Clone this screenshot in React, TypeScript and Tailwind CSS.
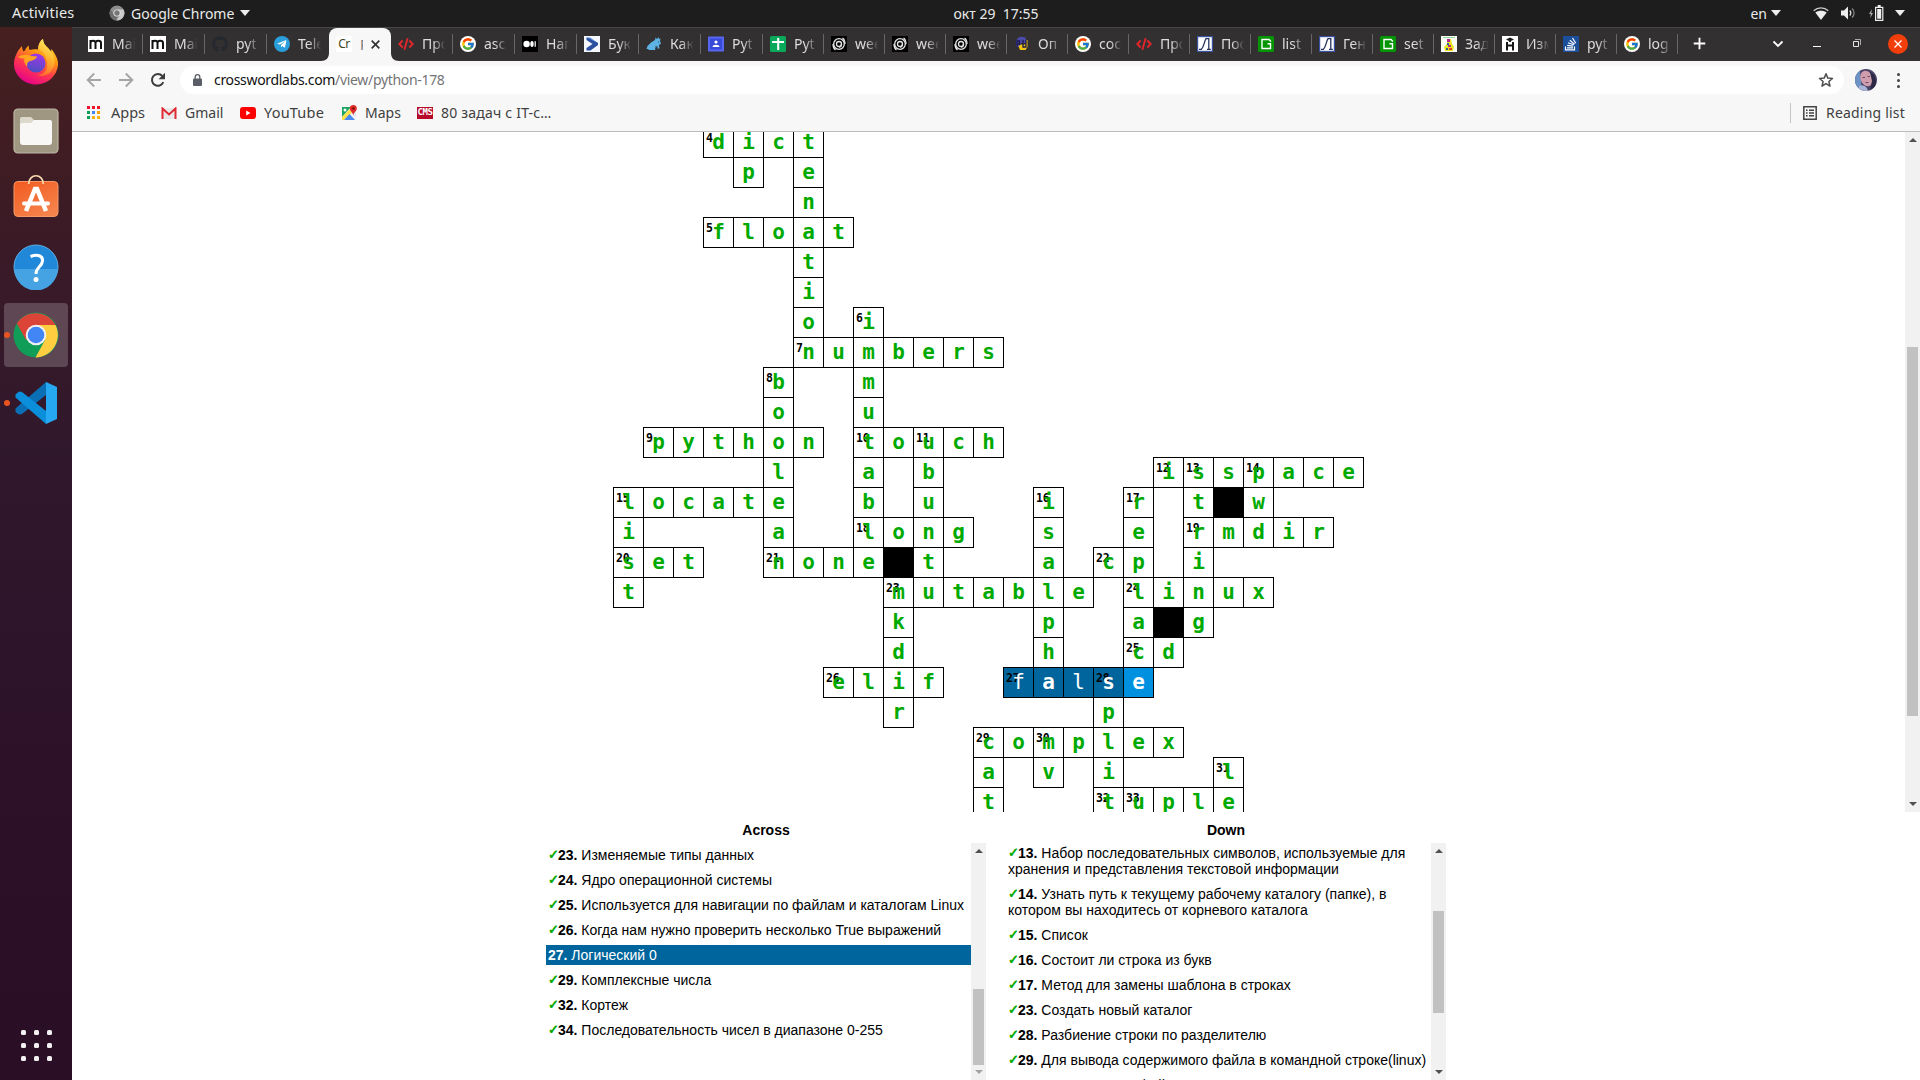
import React from "react";
import { FaGithub, FaTelegramPlane } from "react-icons/fa";
import { FcGoogle } from "react-icons/fc";

const ROWS = 23;
const COLS = 25;

type Word = [row: number, col: number, dir: "a" | "d", text: string, num?: number];

const WORDS: Word[] = [
  [0, 3, "a", "dict", 4],
  [0, 4, "d", "ip"],
  [0, 6, "d", "tenation"],
  [3, 3, "a", "float", 5],
  [6, 8, "d", "immutable", 6],
  [7, 6, "a", "numbers", 7],
  [8, 5, "d", "boolean", 8],
  [10, 1, "a", "python", 9],
  [10, 8, "a", "touch", 10],
  [10, 10, "d", "ubuntu", 11],
  [11, 18, "a", "isspace", 12],
  [11, 19, "d", "string", 13],
  [11, 21, "d", "pwd", 14],
  [12, 0, "a", "locate", 15],
  [12, 0, "d", "list", 15],
  [12, 14, "d", "isalpha", 16],
  [12, 17, "d", "replace", 17],
  [13, 8, "a", "long", 18],
  [13, 19, "a", "rmdir", 19],
  [14, 0, "a", "set", 20],
  [14, 5, "a", "none", 21],
  [14, 16, "a", "cp", 22],
  [15, 9, "a", "mutable", 23],
  [15, 9, "d", "mkdir", 23],
  [15, 17, "a", "linux", 24],
  [17, 17, "a", "cd", 25],
  [18, 7, "a", "elif", 26],
  [18, 13, "a", "false", 27],
  [18, 16, "d", "split", 28],
  [20, 12, "a", "complex", 29],
  [20, 12, "d", "cat", 29],
  [20, 14, "d", "mv", 30],
  [21, 20, "d", "le", 31],
  [22, 16, "a", "tuple", 32],
  [22, 17, "a", "u", 33],
];

const BLACK = new Set(["12-20", "14-9", "16-18"]);

const letters: Record<string, string> = {};
const numbers: Record<string, number> = {};
WORDS.forEach(([r, c, dir, text, num]) => {
  text.split("").forEach((ch, i) => {
    letters[dir === "a" ? `${r}-${c + i}` : `${r + i}-${c}`] = ch;
  });
  if (num) numbers[`${r}-${c}`] = num;
});

function Cell({ id }: { id: string }) {
  if (BLACK.has(id)) return <div className="size-[31px] bg-black" />;
  const ch = letters[id];
  if (!ch) return <div />;
  const [r, c] = id.split("-").map(Number);
  const selected = r === 18 && c >= 13 && c <= 17;
  const fill = selected ? (c === 17 ? "bg-[#0090e0] text-white" : "bg-[#00659c] text-white") : "bg-white text-[#00aa00]";
  const weight = selected && (c === 13 || c === 15) ? "font-normal" : "font-bold";
  return (
    <div className={`relative size-[31px] border border-black text-center ${fill}`}>
      {numbers[id] && (
        <span className="absolute left-[2px] top-[3px] text-[11.5px] leading-[14px] tracking-[-0.2px] font-bold text-black">{numbers[id]}</span>
      )}
      <span className={`relative block text-[21px] leading-[28px] ${weight}`}>{ch}</span>
    </div>
  );
}

function Crossword() {
  const cells: React.ReactNode[] = [];
  for (let r = 0; r < ROWS; r++) for (let c = 0; c < COLS; c++) cells.push(<Cell key={`${r}-${c}`} id={`${r}-${c}`} />);
  return (
    <div className="-mt-[5px] ml-[541px] grid auto-rows-[30px] grid-cols-[repeat(25,30px)] [font-family:'DejaVu_Sans_Mono',monospace]">
      {cells}
    </div>
  );
}

/* ---------- tab icons ---------- */

const G = () => (
  <span className="flex size-4 items-center justify-center rounded-full bg-white"><FcGoogle size={14} /></span>
);
const M = () => (
  <svg viewBox="0 0 16 16" className="size-4"><path fill="#fff" d="M0 0h16v16H0z" /><path fill="none" stroke="#111" strokeWidth="2" d="M2.500 13V4M2.500 7c0-3 5-3 5 0v6M7.500 7c0-3 5.500-3 5.500 0v6" /></svg>
);
const Code = () => (
  <svg viewBox="0 0 16 16" className="size-4"><path fill="none" stroke="#e3262c" strokeWidth="1.900" d="M4.700 4.500 1.300 8l3.400 3.500M11.300 4.500 14.700 8l-3.400 3.500M9.600 2.200 6.400 13.800" /></svg>
);
const Medium = () => (
  <svg viewBox="0 0 16 16" className="size-4"><rect width="16" height="16" fill="#000" /><circle cx="4.600" cy="8" r="3.200" fill="#fff" /><ellipse cx="10" cy="8" rx="1.700" ry="3" fill="#fff" /><rect x="12.600" y="5.200" width="1.200" height="5.600" fill="#fff" /></svg>
);
const Buk = () => (
  <svg viewBox="0 0 16 16" className="size-4"><rect width="16" height="16" fill="#f4f7fd" /><path fill="#4e84d6" d="M2.500 1.500H6L14 7v1.500L11 8z" /><path fill="#2c4f9e" d="M14 7v2L6.500 14.500h-4V12L8.500 8l-6-4V1.500z" /></svg>
);
const Rat = () => (
  <svg viewBox="0 0 16 16" className="size-4"><path fill="#5db4e4" d="M9 4l.5-2.500L11 3l1.500-2 .5 2 1.500-.5L14 5l1 2.500-2 1.500.5 3.500h-2L11 10l-2 2.500.5 1.500H2l1-1H.5l1-3L5 6.500z" /><path stroke="#2f4d60" strokeWidth="1" d="M9 11h3M12 6h1" /></svg>
);
const Classroom = () => (
  <svg viewBox="0 0 16 16" className="size-4"><rect width="16" height="15" y=".5" rx="1" fill="#5767f2" /><rect x="2" y="2.500" width="12" height="11" fill="#3949d8" /><circle cx="8" cy="6" r="1.600" fill="#fff" /><path fill="#fff" d="M4.500 11c0-3 7-3 7 0z" /></svg>
);
const Sheets = () => (
  <svg viewBox="0 0 16 16" className="size-4"><rect width="16" height="16" rx="1.500" fill="#0aa85a" /><path fill="#fff" d="M2 5h12v2H2zM7.200 2h2v12h-2z" /></svg>
);
const Swirl = () => (
  <svg viewBox="0 0 16 16" className="size-4"><rect width="16" height="16" fill="#000" /><g fill="none" stroke="#e4e4e4" strokeWidth="1.300"><circle cx="8" cy="8" r="5.300" /><circle cx="8" cy="8" r="2.500" /><path d="M2 8c0 3 1 5 2.500 6M14 8c0-3-1-5-2.500-6M10.500 8c0 2-1 3-2.500 3" /></g></svg>
);
const Py = () => (
  <svg viewBox="0 0 16 16" className="size-4"><path fill="#4c4aa8" d="M4 2c2-2 8-1.500 8 1v4H7L5 11H2V5z" /><path fill="#f2c511" d="M13.500 4v7l-2 3H6l-1.500-4L7 8.500h5V4z" /><path fill="none" stroke="#1c1a4d" strokeWidth="1.300" d="M3 11V5h2.500v3H3m6-4v7h3V4" /></svg>
);
const Curve = () => (
  <svg viewBox="0 0 16 16" className="size-4"><rect x=".6" y=".6" width="14.800" height="14.800" fill="#fff" stroke="#3a52a4" strokeWidth="1.200" /><path fill="none" stroke="#26335e" strokeWidth="1.300" d="M2 13.400h2.300C7 11 7 6 9 2.600h2.800v10.800M10 13.400h3.800" /></svg>
);
const Green = () => (
  <svg viewBox="0 0 16 16" className="size-4"><rect width="16" height="16" rx="1.500" fill="#049504" /><path fill="none" stroke="#fff" strokeWidth="1.400" d="M9.500 7.700h3v4.800h-8.500v-9h7l1.500 1.500v.8" /></svg>
);
const Zad = () => (
  <svg viewBox="0 0 16 16" className="size-4"><rect width="16" height="16" fill="#fbfbf6" /><path stroke="#93d8a0" d="M2 1.500h12" /><path fill="#e5e51a" d="M6 4l4-1 1 5 2 3-1 4H4L3 11l3-3z" /><path fill="#b5258d" d="M6 3h3v3H6zM7 9h3v2H7z" /><path fill="#2d5e9c" d="M6 7h2v2H6zM5 12h2v2H5z" /><path fill="#e23b2c" d="M8 12h3v2H8z" /></svg>
);
const Robot = () => (
  <svg viewBox="0 0 16 16" className="size-4"><rect width="16" height="16" fill="#fff" /><path fill="#161616" d="M8 1.500 12 3.500 8 5.500 4 3.500zM4 6h2v2.500h4V6h2v8.500h-2V10.500H6v4H4zM7 4h2v2H7z" /></svg>
);
const Stack = () => (
  <svg viewBox="0 0 16 16" className="size-4"><rect width="16" height="16" fill="#1b4f9c" /><path fill="none" stroke="#fff" strokeWidth="1.200" d="M2.500 10.500v3.300h9v-3.300M4 11.800h6M4.200 9.400l6 .8M5 6.800l5.700 2M6.800 4.200l4.800 3.900M9.500 2l3.300 5.200" /></svg>
);

type Tab = { label: string; icon: React.ReactNode };
const TABS: Tab[] = [
  { label: "Mai", icon: <M /> },
  { label: "Mai", icon: <M /> },
  { label: "pyt", icon: <FaGithub size={16} color="#24292f" /> },
  { label: "Tele", icon: <span className="flex size-4 items-center justify-center rounded-full bg-[#2a9fdb]"><FaTelegramPlane size={10} color="#fff" /></span> },
  { label: "P", icon: null },
  { label: "Про", icon: <Code /> },
  { label: "asc", icon: <G /> },
  { label: "Нап", icon: <Medium /> },
  { label: "Бук", icon: <Buk /> },
  { label: "Как", icon: <Rat /> },
  { label: "Pyt", icon: <Classroom /> },
  { label: "Pyt", icon: <Sheets /> },
  { label: "wee", icon: <Swirl /> },
  { label: "wee", icon: <Swirl /> },
  { label: "wee", icon: <Swirl /> },
  { label: "Оп", icon: <Py /> },
  { label: "coc", icon: <G /> },
  { label: "Про", icon: <Code /> },
  { label: "Пос", icon: <Curve /> },
  { label: "list", icon: <Green /> },
  { label: "Ген", icon: <Curve /> },
  { label: "set", icon: <Green /> },
  { label: "Зад", icon: <Zad /> },
  { label: "Изм", icon: <Robot /> },
  { label: "pyt", icon: <Stack /> },
  { label: "log", icon: <G /> },
];

function TabStrip() {
  return (
    <div className="flex h-[34px] shrink-0 border-t border-[#494747] bg-[#333031] pl-[9px] text-[14px] text-[#dedddc]">
      {TABS.map((t, i) => {
        const width = i < 11 ? "w-[62px]" : "w-[61px]";
        if (i === 4)
          return (
            <div key={i} className={`relative ${width} flex h-[33px] items-center rounded-t-[8px] bg-[#f7f7f7] pb-px pl-[7px] text-[#3b3b3b]`}>
              <svg viewBox="0 0 8 8" className="absolute -left-2 bottom-0 size-2"><path fill="#f7f7f7" d="M8 0v8H0c5 0 8-3 8-8z" /></svg>
              <svg viewBox="0 0 8 8" className="absolute -right-2 bottom-0 size-2"><path fill="#f7f7f7" d="M0 0v8h8c-5 0-8-3-8-8z" /></svg>
              <span className="flex size-4 items-center justify-center bg-white text-[12px] tracking-[-0.5px] text-[#3d4420]">Cr</span>
              <span className="ml-2 w-[3px] overflow-hidden text-[#777]">P</span>
              <svg viewBox="0 0 9 9" className="ml-[8px] size-[9px]"><path stroke="#333" strokeWidth="1.700" d="M.7.700l7.600 7.600M8.300.700.700 8.300" /></svg>
            </div>
          );
        return (
          <div key={i} className={`${width} flex h-[33px] items-center pb-px pl-[7px]`}>
            <span className="size-4 shrink-0">{t.icon}</span>
            <span className="ml-2 -mt-px w-[24px] overflow-hidden whitespace-nowrap [mask-image:linear-gradient(to_right,#000_45%,transparent_98%)]">{t.label}</span>
            <span className={`ml-auto h-5 w-px ${i === 3 ? "" : "bg-[#696667]"}`} />
          </div>
        );
      })}
      <div className="flex flex-1 items-center pb-[2px] text-white">
        <svg viewBox="0 0 14 14" className="ml-[15px] size-[13px]"><path stroke="#fff" strokeWidth="2" d="M7 .8v12.400M.8 7h12.400" /></svg>
        <svg viewBox="0 0 12 8" className="ml-[66px] h-[8px] w-[12px]"><path fill="none" stroke="#fff" strokeWidth="1.800" d="M1.500 1.500 6 6l4.500-4.500" /></svg>
        <span className="ml-[29px] mt-[5px] h-px w-[8px] bg-white" />
        <svg viewBox="0 0 9 9" className="ml-[31px] size-[9px]"><path fill="none" stroke="#e8e8e8" d="M1.500 2.500h5v5h-5z" /><path fill="none" stroke="#aaa" d="M3 .5h5.500V6" /></svg>
        <span className="ml-[27px] flex size-5 items-center justify-center rounded-full bg-[#f23e0a]">
          <svg viewBox="0 0 8 8" className="size-2"><path stroke="#fff" strokeWidth="1.300" d="M.5.500l7 7M7.500.500l-7 7" /></svg>
        </span>
      </div>
    </div>
  );
}

function Toolbar() {
  return (
    <div className="flex h-[38px] shrink-0 items-center bg-[#f7f7f7] pl-[14px]">
      <svg viewBox="0 0 16 16" className="size-4"><path fill="none" stroke="#a5a5a5" strokeWidth="1.900" d="M15 8H2M8.200 1.500 1.700 8l6.500 6.500" /></svg>
      <svg viewBox="0 0 16 16" className="ml-4 size-4"><path fill="none" stroke="#a5a5a5" strokeWidth="1.900" d="M1 8h13M7.800 1.500 14.300 8l-6.500 6.500" /></svg>
      <svg viewBox="0 0 16 16" className="ml-4 size-4"><path fill="none" stroke="#3c3c3c" strokeWidth="2" d="M13.300 10.200A5.900 5.900 0 1 1 12.300 4" /><path fill="#3c3c3c" d="M15 .8v6.400H8.600z" /></svg>
      <div className="ml-[14px] flex h-7 w-[1664px] items-center rounded-full bg-white pb-px pl-[13px]">
        <svg viewBox="0 0 9 12" className="h-[12px] w-[9px]"><rect y="4.500" width="9" height="7.500" rx="1" fill="#5a5e66" /><path fill="none" stroke="#5a5e66" strokeWidth="1.300" d="M2.200 5V3a2.300 2.300 0 0 1 4.600 0v2" /></svg>
        <span className="ml-[12px] text-[14px] tracking-[-0.320px] text-[#747476]"><span className="text-[#111]">crosswordlabs.com</span>/view/python-178</span>
        <svg viewBox="0 0 16 16" className="ml-auto mr-[10px] size-4"><path fill="none" stroke="#4d4d4d" strokeWidth="1.500" strokeLinejoin="round" d="m8 1.800 1.800 4.300 4.700.4-3.600 3 1.100 4.600L8 11.600l-4 2.500 1.100-4.600-3.600-3 4.700-.4z" /></svg>
      </div>
      <svg viewBox="0 0 22 22" className="ml-[11px] size-[22px]">
        <defs><clipPath id="av"><circle cx="11" cy="11" r="11" /></clipPath></defs>
        <g clipPath="url(#av)"><path fill="#4a4468" d="M0 0h22v22H0z" /><path fill="#6c93c4" d="M0 2h5l2 20H0z" /><ellipse cx="11.500" cy="9.500" rx="6" ry="8" transform="rotate(-20 11.500 9.500)" fill="#cf9dac" /><path fill="#2b2944" d="M15 3c6 2 7 10 5 15l-5 3 2-9z" /><path fill="#a9b5d6" d="M4 17c4-2 8 0 9 5H4z" /><path stroke="#6b4a63" strokeWidth="1" d="M7.500 8.500h2.500M12.500 7.500H15M10.500 13.500h3" /></g>
      </svg>
      <span className="ml-[20px] flex flex-col gap-[3px]">
        <span className="size-[3px] rounded-full bg-[#444]" /><span className="size-[3px] rounded-full bg-[#444]" /><span className="size-[3px] rounded-full bg-[#444]" />
      </span>
    </div>
  );
}

const APP_DOTS = ["#f0142f", "#f0142f", "#f0142f", "#0f9d58", "#4285f4", "#f4a300", "#0f9d58", "#f9b208", "#f9b208"];

function Bookmarks() {
  return (
    <div className="flex h-[33px] shrink-0 items-center border-b border-[#bdbdbd] bg-[#f7f7f7] pb-[5px] pl-[15px] text-[14px] text-[#3f3f3f]">
      <svg viewBox="0 0 13 13" className="size-[13px]">{APP_DOTS.map((c, i) => <rect key={i} x={(i % 3) * 5} y={Math.floor(i / 3) * 5} width="3" height="3" fill={c} />)}</svg>
      <span className="ml-[11px] w-[35px] whitespace-nowrap text-[14.500px]">Apps</span>
      <svg viewBox="0 0 16 12" className="ml-[15px] h-[12px] w-4"><path fill="#e9e9e9" d="M1 1h14v11H1z" /><path fill="none" stroke="#df2a35" strokeWidth="2" d="M1.500 12V1.500L8 7.500l6.500-6V12" /></svg>
      <span className="ml-[8px] w-[39px] whitespace-nowrap">Gmail</span>
      <svg viewBox="0 0 16 12" className="ml-[16px] h-[12px] w-4"><rect width="16" height="12" rx="3" fill="#f00" /><path fill="#fff" d="M6.200 3.500v5L10.500 6z" /></svg>
      <span className="ml-[8px] w-[61px] whitespace-nowrap text-[14.500px] tracking-[0.200px]">YouTube</span>
      <svg viewBox="0 0 16 16" className="ml-[16px] size-4"><path fill="#1ea362" d="M1 2h9L1 12z" /><path fill="#ffe047" d="m1 12 8-8 2 4-8 7H1z" /><path fill="#e3e9f0" d="m10 8 5 5V6z" /><path fill="#4a89f3" d="m3 15 5.500-6 5.500 6z" /><circle cx="4" cy="5" r="1.500" fill="#fff" /><path fill="#df2a2a" d="M12.300 0a3.500 3.500 0 0 1 3.500 3.500c0 2.500-3 3.500-3.500 7-.5-3.500-3.500-4.500-3.500-7A3.500 3.500 0 0 1 12.300 0z" /><circle cx="12.300" cy="3.500" r="1.300" fill="#7d1313" /></svg>
      <span className="ml-[8px] w-[37px] whitespace-nowrap">Maps</span>
      <span className="ml-[15px] flex h-[12px] w-4 items-center justify-center bg-[#b80a2a] text-[9px] leading-none font-bold tracking-[-0.500px] text-white [font-family:'DejaVu_Sans_Mono',monospace]">CMS</span>
      <span className="ml-[8px] whitespace-nowrap tracking-[0.200px]">80 задач с IT-с…</span>
      <span className="ml-auto h-5 w-px bg-[#c4c4c4]" />
      <svg viewBox="0 0 14 14" className="ml-[12px] size-[14px]"><path fill="none" stroke="#444" strokeWidth="1.500" d="M.8.800h12.400v12.400H.8z" /><path stroke="#444" strokeWidth="1.400" d="M3 4.300h1.600M6 4.300h5M3 7h1.600M6 7h5M3 9.700h1.600M6 9.700h5" /></svg>
      <span className="ml-[9px] mr-[14px] w-[80px] whitespace-nowrap tracking-[0.200px]">Reading list</span>
    </div>
  );
}

const Tri = ({ className = "" }) => (
  <svg viewBox="0 0 10 6" className={`h-[6px] w-[10px] ${className}`}><path fill="#eee" d="M0 0h10L5 6z" /></svg>
);

function TopBar() {
  return (
    <div className="grid h-[27px] shrink-0 grid-cols-[1fr_auto_1fr] items-center bg-[#1d1d1d] pb-px text-[14px] text-[#eaeaea]">
      <div className="flex items-center pl-[12px]">
        <span className="w-[63px] text-[14.500px] tracking-[0.200px]">Activities</span>
        <svg viewBox="0 0 16 16" className="ml-[34px] size-4"><circle cx="8" cy="8" r="7.500" fill="#8c8c8c" /><path fill="#c9c9c9" d="M8 4.500h6.500A7.500 7.500 0 0 1 7.500 15.500L11 10z" /><path fill="#6d6d6d" d="M1.500 4.500 5 10l3 2-1 3.500A7.500 7.500 0 0 1 1.500 4.500z" /><circle cx="8" cy="8" r="3.600" fill="#e6e6e6" /><circle cx="8" cy="8" r="2.700" fill="#777" /></svg>
        <span className="ml-[6px] w-[104px] whitespace-nowrap">Google Chrome</span>
        <Tri className="ml-[5px] w-[9px]" />
      </div>
      <span className="whitespace-pre pl-[72px]">окт 29  17:55</span>
      <div className="flex items-center justify-end pr-[15px]">
        <span>en</span>
        <Tri className="ml-[4px]" />
        <svg viewBox="0 0 16 13" className="ml-[32px] h-[13px] w-4"><path fill="#eee" d="M8 13 2.300 5.500c3-2.500 8.400-2.500 11.400 0z" /><path fill="none" stroke="#ccc" strokeWidth="1.300" d="M.7 3.700c4-3.800 10.600-3.800 14.600 0" /></svg>
        <svg viewBox="0 0 16 14" className="ml-[12px] h-[14px] w-4"><path fill="#eee" d="M0 4.500h3l4-4v13l-4-4H0z" /><path fill="none" stroke="#ddd" strokeWidth="1.200" d="M8.800 4.500c1.300 1.500 1.300 3.500 0 5" /><path fill="none" stroke="#888" strokeWidth="1.200" d="M11 2.500c2.800 2.500 2.800 6.500 0 9" /></svg>
        <svg viewBox="0 0 15 16" className="ml-[12px] h-4 w-[15px]"><path fill="none" stroke="#eee" strokeWidth="1.200" d="M6.600 2.300h7.200v13H6.600z" /><path fill="#eee" d="M8.200 4h4v9.700h-4zM8.700 0h3v2h-3z" /><path fill="#aaa" d="M3 4 0 9h1.800l-.5 4L4 8H2.300z" /></svg>
        <Tri className="ml-[11px]" />
      </div>
    </div>
  );
}

function Dock() {
  return (
    <div className="flex w-[72px] shrink-0 flex-col items-center bg-[linear-gradient(#46201f_0px,#3a1a27_230px,#30182c_420px,#2c1028_800px,#2a0e26_1053px)]">
      <svg viewBox="0 0 48 48" className="mt-[10px] size-12">
        <defs>
          <linearGradient id="ff1" x1=".8" y1="0" x2=".3" y2="1"><stop offset="0" stopColor="#fff44f" /><stop offset=".35" stopColor="#ff980e" /><stop offset=".65" stopColor="#ff3750" /><stop offset="1" stopColor="#e3008d" /></linearGradient>
          <linearGradient id="ff2" x1=".7" y1="0" x2=".4" y2="1"><stop offset="0" stopColor="#fff36e" /><stop offset=".5" stopColor="#ffb52e" /><stop offset="1" stopColor="#ff6a2e" /></linearGradient>
          <linearGradient id="ff3" x1=".6" y1="0" x2=".4" y2="1"><stop offset="0" stopColor="#a336e8" /><stop offset="1" stopColor="#4b4fc0" /></linearGradient>
        </defs>
        <path fill="url(#ff1)" d="M10 9c0 2 .5 4 1.500 5.500l1.500-1c.5-2 2-4 4-5-.5 2 0 3 .5 4.500 3-1 6-1 9-.5C26 8 28 4 31 2c0 4 2 6 5 9l3 4 .5-3c4 5 7 11 6.500 16C45 39 35.500 47.500 24 47.500S2 38.500 2 27c0-6 3-13 8-18z" />
        <path fill="url(#ff2)" d="M26 12C26 8 28 4 31 2c0 4 2 6 5 9 6 6 9 14 4 22-4 6-10 7-14 5 7-1 10-6 9-13-1-6-4-11-9-13z" />
        <circle cx="24" cy="26" r="9.500" fill="url(#ff3)" />
        <path fill="#ffa51f" d="M6 20c4-2.500 9-3 13-1l6 .5c0 2-4 4-6.500 4.500-3 .5-4 3-3 6-3-3-4-6-3-8.500-2 0-4-.5-6.500-1.500z" />
      </svg>
      <svg viewBox="0 0 46 46" className="mt-[23px] size-[46px]">
        <rect x="1" y="1" width="44" height="44" rx="4" fill="#9f9782" stroke="#beb8a5" strokeWidth="1.200" />
        <path fill="#dcd8cb" d="M7 11q0-2 2-2h9l4 4v8H7z" /><path fill="#f8f7f5" d="M7 17q0-2 2-2h9l3-3h16q2 0 2 2v20q0 3-3 3H10q-3 0-3-3z" />
      </svg>
      <svg viewBox="0 0 46 44" className="mt-[20px] h-[44px] w-[46px]">
        <defs><linearGradient id="sw" x1="0" y1="0" x2=".6" y2="1"><stop offset="0" stopColor="#f25a20" /><stop offset="1" stopColor="#f5824a" /></linearGradient></defs>
        <rect x="1" y="7.500" width="44" height="35" rx="4" fill="url(#sw)" stroke="#f59a66" strokeWidth="1" />
        <path fill="none" stroke="#f9dcae" strokeWidth="1.700" d="M15.700 10c0-11 14.600-11 14.600 0" />
        <path fill="none" stroke="#fff" strokeWidth="4.500" d="M13 37 22 15h2l9 22" /><path stroke="#fff" strokeWidth="4" strokeLinecap="round" d="M11 29.500h24" />
      </svg>
      <svg viewBox="0 0 46 46" className="mt-[26px] size-[46px]">
        <circle cx="23" cy="23" r="22" fill="#2187d8" stroke="#5cb0e6" /><path fill="#45a3e3" d="M1.500 25h43a21.500 21.500 0 0 1-43 0z" />
        <path fill="none" stroke="#fff" strokeWidth="3" d="M17.500 12.500c7-2.500 12.500-1 12 4.500-.5 6-6.500 6-6.500 13" /><circle cx="23" cy="35.500" r="2.500" fill="#fff" />
      </svg>
      <div className="mt-[13px] flex h-16 w-full items-center">
        <span className="z-10 -mr-1 ml-[4px] size-[6px] rounded-full bg-[#e95420]" />
        <div className="-ml-[2px] flex size-16 items-center justify-center rounded-[4px] bg-white/20">
          <svg viewBox="0 0 46 46" className="size-[46px]">
            <circle cx="23" cy="23" r="22.500" fill="#109d58" />
            <path fill="#db4437" d="M3.800 11.500A22.500 22.500 0 0 1 42.500 13H23L13 28z" />
            <path fill="#ffcd40" d="M23 13h19.500A22.500 22.500 0 0 1 22.500 45.500L32 28z" />
            <circle cx="23" cy="23" r="10.300" fill="#f1f1f1" /><circle cx="23" cy="23" r="8.300" fill="#4285f4" />
          </svg>
        </div>
      </div>
      <div className="mt-[14px] flex h-[44px] w-full items-center">
        <span className="ml-[4px] size-[6px] rounded-full bg-[#e95420]" />
        <svg viewBox="0 0 42 42" className="ml-[5px] size-[42px]">
          <path fill="#0a6fb5" d="M.5 26.500 31 0v13L7 32 4 32.500.5 30z" /><path fill="#0b8fdb" d="M.5 15.500v-3L4 9.500l3 .5 24 19v13z" /><path fill="#27a8f2" d="M31 0l11 5v32l-11 5z" />
        </svg>
      </div>
      <div className="mt-auto mb-[19px] grid grid-cols-3 gap-[8px]">
        {Array.from({ length: 9 }, (_, i) => <span key={i} className="size-[5px] rounded-[1.500px] bg-[#f2f0f1]" />)}
      </div>
    </div>
  );
}

type BarProps = { thumb: string; dim?: boolean };
function Scrollbar({ thumb, dim }: BarProps) {
  return (
    <div className="flex w-[15px] shrink-0 flex-col items-center bg-[#f1f1f1]">
      <svg viewBox="0 0 8 4" className="mt-[6px] h-1 w-2 shrink-0"><path fill="#505050" d="M4 0l4 4H0z" /></svg>
      <div className={`w-[11px] shrink-0 bg-[#c1c1c1] ${thumb}`} />
      <svg viewBox="0 0 8 4" className="mt-auto mb-[6px] h-1 w-2 shrink-0"><path fill={dim ? "#a3a3a3" : "#505050"} d="M0 0h8L4 4z" /></svg>
    </div>
  );
}

type Clue = [num: number, text: string];
const ACROSS: Clue[] = [
  [23, "Изменяемые типы данных"],
  [24, "Ядро операционной системы"],
  [25, "Используется для навигации по файлам и каталогам Linux"],
  [26, "Когда нам нужно проверить несколько True выражений"],
  [27, "Логический 0"],
  [29, "Комплексные числа"],
  [32, "Кортеж"],
  [34, "Последовательность чисел в диапазоне 0-255"],
];
const DOWN: Clue[] = [
  [13, "Набор последовательных символов, используемые для хранения и представления текстовой информации"],
  [14, "Узнать путь к текущему рабочему каталогу (папке), в котором вы находитесь от корневого каталога"],
  [15, "Список"],
  [16, "Состоит ли строка из букв"],
  [17, "Метод для замены шаблона в строках"],
  [23, "Создать новый каталог"],
  [28, "Разбиение строки по разделителю"],
  [29, "Для вывода содержимого файла в командной строке(linux)"],
  [30, "Перемещение файлов"],
];

function ClueList({ title, clues, thumb, dim, offset }: { title: string; clues: Clue[]; offset: string } & BarProps) {
  return (
    <div className="flex w-[440px] flex-col text-[14px] leading-[16px] text-black">
      <h2 className="pt-[10px] pb-[5px] text-center font-bold">{title}</h2>
      <div className="flex h-[237px] overflow-hidden">
        <ul className={`flex w-[425px] flex-col gap-[5px] ${offset}`}>
          {clues.map(([n, text]) => (
            <li key={n} className={n === 27 ? "bg-[#00659c] p-[2px] text-white" : "p-[2px]"}>
              {n !== 27 && <span className="inline-block h-4 w-[10px] align-top text-[13px] font-bold text-[#00aa00] [-webkit-text-stroke:0.700px_#00aa00] [font-family:'DejaVu_Sans',sans-serif]">✓</span>}
              <b>{n}.</b> {text}
            </li>
          ))}
        </ul>
        <Scrollbar thumb={thumb} dim={dim} />
      </div>
    </div>
  );
}

export default function App() {
  return (
    <div className="flex h-[1080px] w-[1920px] flex-col overflow-hidden bg-white [font-family:'Noto_Sans',sans-serif]">
      <TopBar />
      <div className="flex min-h-0 flex-1">
        <Dock />
        <div className="flex min-w-0 flex-1 flex-col">
          <TabStrip />
          <Toolbar />
          <Bookmarks />
          <div className="flex h-[680px] shrink-0 overflow-hidden">
            <div className="flex-1"><Crossword /></div>
            <Scrollbar thumb="mt-[205px] h-[369px]" />
          </div>
          <div className="ml-[474px] flex gap-5 [font-family:'Liberation_Sans',Arial,sans-serif]">
            <ClueList title="Across" clues={ACROSS} offset="pt-[2px]" thumb="mt-[136px] h-[76px]" dim />
            <ClueList title="Down" clues={DOWN} offset="" thumb="mt-[58px] h-[102px]" />
          </div>
        </div>
      </div>
    </div>
  );
}
